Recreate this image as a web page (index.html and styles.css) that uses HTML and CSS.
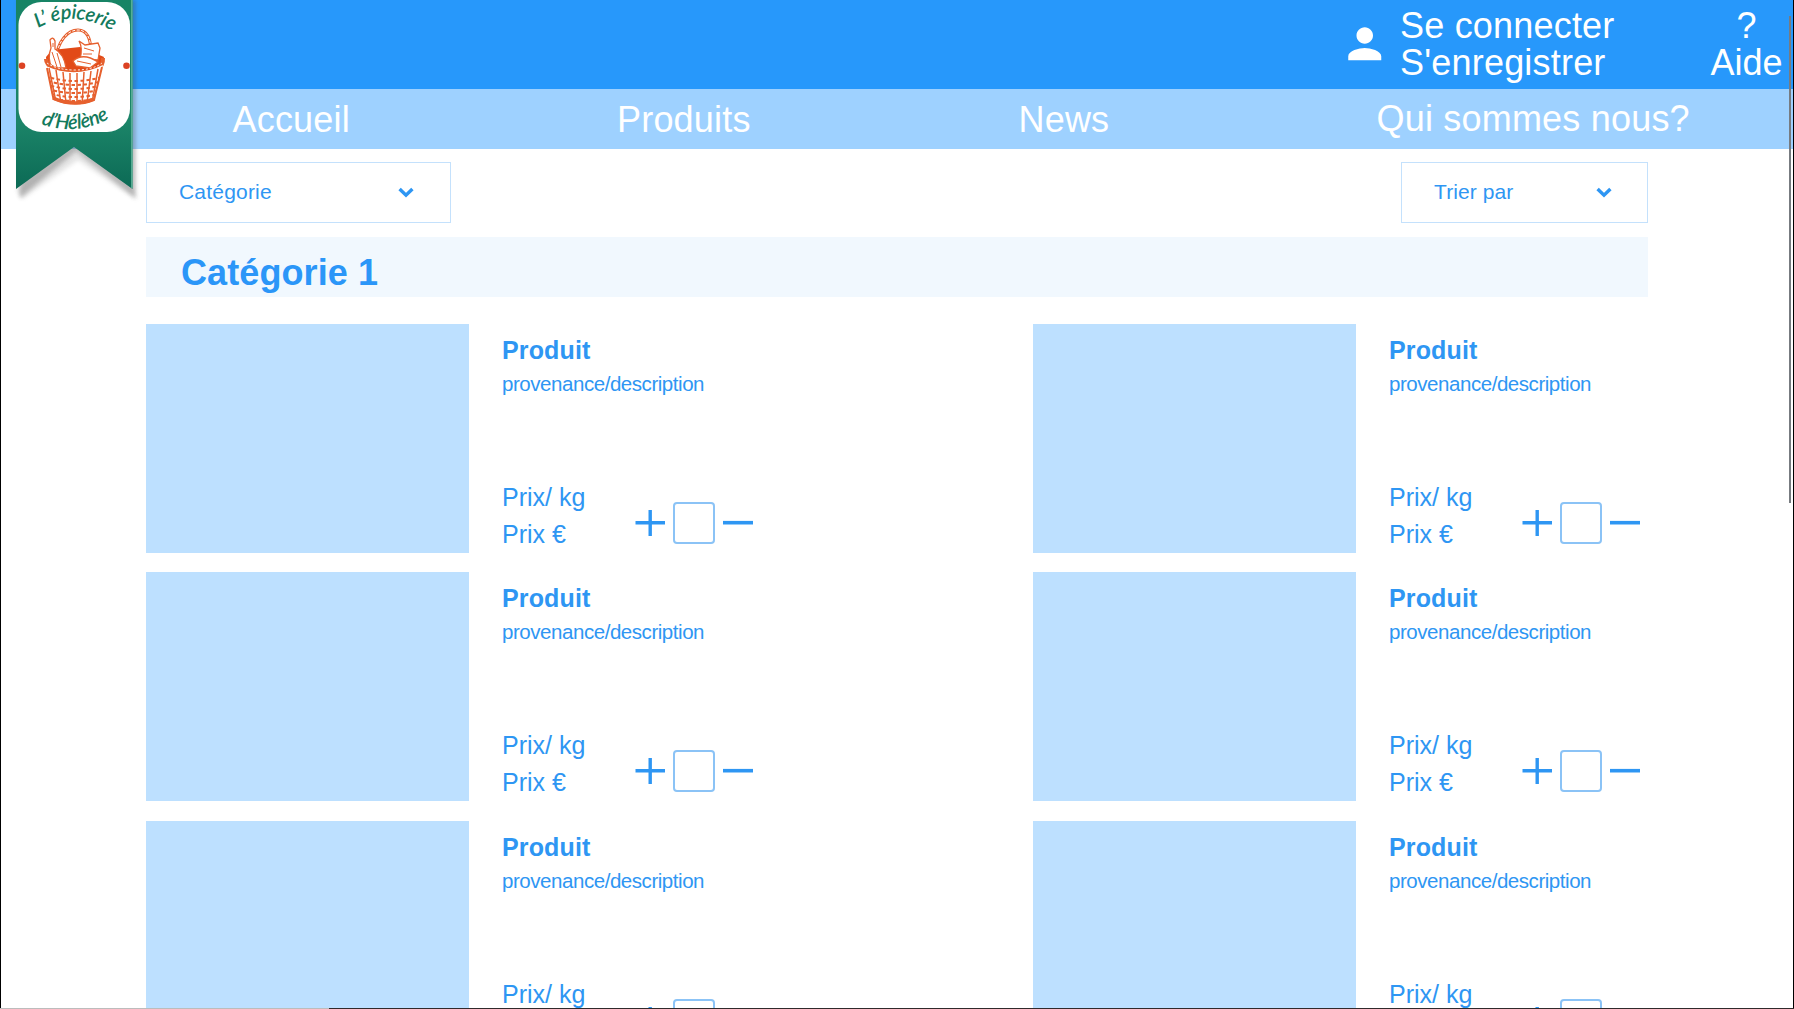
FILE: index.html
```html
<!DOCTYPE html>
<html lang="fr">
<head>
<meta charset="utf-8">
<title>L'épicerie d'Hélène</title>
<link rel="stylesheet" href="styles.css">
</head>
<body>
<svg class="defs" width="0" height="0">
  <symbol id="chevron" viewBox="0 0 16 11"><path d="M1.6 2 8 8.2 14.4 2" fill="none" stroke="currentColor" stroke-width="3.4"/></symbol>
  <symbol id="plus" viewBox="0 0 30 26"><path d="M0.500 12.700H30M15.200 0V26" fill="none" stroke="currentColor" stroke-width="3.400"/></symbol>
  <symbol id="minus" viewBox="0 0 30 26"><path d="M0 12.700H30" stroke="currentColor" stroke-width="3.600"/></symbol>
</svg>

<header class="topbar">
  <svg class="person" viewBox="0 0 24 24"><path fill="#fff" d="M12 12c2.21 0 4-1.79 4-4s-1.79-4-4-4-4 1.79-4 4 1.79 4 4 4zm0 2c-2.67 0-8 1.34-8 4v2h16v-2c0-2.66-5.33-4-8-4z"/></svg>
  <div class="account"><a>Se connecter</a><a>S'enregistrer</a></div>
  <div class="help"><span>?</span><span>Aide</span></div>
</header>
<nav class="menu"><a>Accueil</a><a>Produits</a><a>News</a><a class="about">Qui sommes nous?</a></nav>

<main class="content">
  <div class="filters">
    <div class="select category">Catégorie<svg class="chevron"><use href="#chevron"/></svg></div>
    <div class="select sort">Trier par<svg class="chevron"><use href="#chevron"/></svg></div>
  </div>
  <h1 class="heading">Catégorie 1</h1>
  <section class="products">
    <article class="card"><div class="photo"></div><div class="info"><h2>Produit</h2><p class="desc">provenance/description</p><div class="buy"><p class="price">Prix/ kg<br>Prix €</p><div class="qty"><svg class="op"><use href="#plus"/></svg><span class="box"></span><svg class="op"><use href="#minus"/></svg></div></div></div></article>
    <article class="card"><div class="photo"></div><div class="info"><h2>Produit</h2><p class="desc">provenance/description</p><div class="buy"><p class="price">Prix/ kg<br>Prix €</p><div class="qty"><svg class="op"><use href="#plus"/></svg><span class="box"></span><svg class="op"><use href="#minus"/></svg></div></div></div></article>
    <article class="card"><div class="photo"></div><div class="info"><h2>Produit</h2><p class="desc">provenance/description</p><div class="buy"><p class="price">Prix/ kg<br>Prix €</p><div class="qty"><svg class="op"><use href="#plus"/></svg><span class="box"></span><svg class="op"><use href="#minus"/></svg></div></div></div></article>
    <article class="card"><div class="photo"></div><div class="info"><h2>Produit</h2><p class="desc">provenance/description</p><div class="buy"><p class="price">Prix/ kg<br>Prix €</p><div class="qty"><svg class="op"><use href="#plus"/></svg><span class="box"></span><svg class="op"><use href="#minus"/></svg></div></div></div></article>
    <article class="card"><div class="photo"></div><div class="info"><h2>Produit</h2><p class="desc">provenance/description</p><div class="buy"><p class="price">Prix/ kg<br>Prix €</p><div class="qty"><svg class="op"><use href="#plus"/></svg><span class="box"></span><svg class="op"><use href="#minus"/></svg></div></div></div></article>
    <article class="card"><div class="photo"></div><div class="info"><h2>Produit</h2><p class="desc">provenance/description</p><div class="buy"><p class="price">Prix/ kg<br>Prix €</p><div class="qty"><svg class="op"><use href="#plus"/></svg><span class="box"></span><svg class="op"><use href="#minus"/></svg></div></div></div></article>
  </section>
</main>

<svg class="logo" viewBox="0 0 160 210">
  <defs>
    <linearGradient id="ribbon" x1="0" y1="0" x2="0" y2="1"><stop offset="0" stop-color="#178465"/><stop offset=".65" stop-color="#1b8468"/><stop offset="1" stop-color="#0c6a55"/></linearGradient>
    <filter id="soft" x="-20%" y="-20%" width="140%" height="140%"><feGaussianBlur stdDeviation="2"/></filter>
    <path id="arcTop" d="M38 28Q75 8 114 32"/>
    <path id="arcBottom" d="M41 124Q77 137 112 117"/>
    <clipPath id="body"><path d="M46 66 53 99Q74 109 94 100L103 65Q75 79 46 66Z"/></clipPath>
  </defs>
  <path d="M18 0H135.500V198L76 151 20 198Z" fill="#444" opacity=".35" filter="url(#soft)"/>
  <path d="M16 189 74 147 132.500 189 137 200 78 160 22 199Z" fill="#888" opacity=".22" filter="url(#soft)"/>
  <path d="M16 0H132.500V189L74 147 16 189Z" fill="url(#ribbon)"/>
  <path d="M131.800 0V188" stroke="#5cb39a" stroke-width="1.400"/>
  <rect x="18.500" y="2" width="111.500" height="130" rx="23" fill="#fff"/>
  <g class="lettering">
    <text><textPath href="#arcTop" textLength="78">L’ épicerie</textPath></text>
    <text><textPath href="#arcBottom" textLength="71">d’Hélène</textPath></text>
  </g>
  <circle cx="22" cy="65.700" r="3.300" fill="#dc4223"/><circle cx="126.500" cy="65.700" r="3.300" fill="#dc4223"/>
  <g fill="none" stroke="#e6602e">
    <path d="M55 61C58 40 68 30 78 30S90 40 91 48" stroke-width="3"/>
    <path d="M55 61C58 40 68 30 78 30S90 40 91 48" stroke="#fff" stroke-width="1" stroke-dasharray="3 1.500"/>
    <path d="M46 57 52 50 80 47 104 57 101 68Q75 76 47 68Z" fill="#e24a18" stroke="none"/>
    <path d="M50 40Q53 36 55 41V49Q64 54 66 68L52 68Q47 58 51 48Z" fill="#fff" stroke-width="1.300"/>
    <path d="M52 52 57 67M57 53 61 67M53 43V47" stroke-width="1"/>
    <path d="M79 41 85 45 98 43 100 48 98 60 80 59Q83 48 79 41Z" fill="#fff" stroke-width="1.300"/>
    <path d="M73 61Q83 52 98 62L90 68 76 66Z" fill="#fff" stroke-width="1.300"/>
    <path d="M84 48 94 51M83 54H92M77 61 91 64" stroke-width="1"/>
    <path d="M46 59Q46 70 75 72T103 58" stroke-width="4"/>
    <path d="M47 63Q57 70 75 70T102 63" stroke="#fff" stroke-width="1" stroke-dasharray="2 2"/>
    <g clip-path="url(#body)">
      <path d="M44 64H106V108H44Z" fill="#fff" stroke="none"/>
      <path d="M45 76Q75 86 105 76M45 84Q75 94 105 84M45 92Q75 102 105 92" stroke-width="2" stroke-dasharray="3.500 2.500"/>
      <path d="M45 80Q75 90 105 80M45 88Q75 98 105 88M45 96Q75 106 105 96" stroke-width="2" stroke-dasharray="3.500 2.500" stroke-dashoffset="3"/>
      <path d="M49 68 56 102M56 70 61 104M63 72 66 104M70 73V105M77 73V105M84 72 82 105M91 71 87 104M98 69 92 103" stroke-width="1.500"/>
    </g>
    <path d="M47 68 53.500 99Q74 108 94 100L102 67" stroke-width="2"/>
    <path d="M53 98Q74 107 94 99" stroke-width="3"/>
  </g>
</svg>
<div class="edge left"></div><div class="edge right"></div><div class="scroll-thumb"></div><div class="bottom-line"></div>
</body>
</html>
```
FILE: styles.css
```css
* { box-sizing: border-box; }
body {
  margin: 0;
  width: 1794px;
  height: 1009px;
  overflow: hidden;
  position: relative;
  background: #fff;
  color: #2e96f3;
  font-family: "Liberation Sans", Arial, sans-serif;
}
h1, h2, p { margin: 0; }
.defs { display: block; }
.topbar {
  height: 89px;
  display: flex;
  justify-content: flex-end;
  background: #2798fb;
  color: #fff;
  font-size: 36px;
  line-height: 37px;
  padding: 7px 11px 0 0;
}
.person { width: 49.500px; height: 49.500px; margin: 11.500px 10.500px 0 0; }
.account { display: flex; flex-direction: column; width: 310px; letter-spacing: .2px; }
.help { display: flex; flex-direction: column; align-items: center; width: 73px; }
.menu {
  height: 59.500px;
  display: grid;
  grid-template-columns: 384.500px 401.500px 358px 1fr;
  padding: 10px 0 0 232.500px;
  background: #9ed1ff;
  color: #fff;
  font-size: 36px;
  line-height: 41px;
  letter-spacing: .2px;
}
.about { margin-top: -1px; }
.content { width: 1502px; margin: 13.500px 0 0 146px; }
.filters { display: flex; justify-content: space-between; }
.select {
  height: 61px;
  display: flex;
  align-items: center;
  justify-content: space-between;
  border: 1px solid #c4e1fc;
  font-size: 21px;
  padding: 0 36px 1px 32px;
}
.category { width: 305px; letter-spacing: .2px; }
.sort { width: 247px; padding-right: 35px; letter-spacing: .1px; }
.chevron { width: 16px; height: 11px; margin-top: 1px; }
.heading {
  height: 60px;
  margin: 14px 0 27px;
  padding: 6px 0 0 35px;
  background: #f1f8fe;
  color: #2b96f8;
  font-size: 36px;
  line-height: 60px;
  letter-spacing: .1px;
}
.products {
  display: grid;
  grid-template-columns: 887px 615px;
  grid-auto-rows: 229.200px;
  row-gap: 19.100px;
}
.card { display: flex; }
.photo { width: 323px; background: #bde0ff; }
.info { display: flex; flex-direction: column; padding: 11px 0 0 33px; }
.info h2 { font-size: 25px; line-height: 30px; letter-spacing: .15px; }
.desc { font-size: 20.500px; line-height: 26px; letter-spacing: -.450px; margin-top: 6px; }
.buy { display: flex; margin-top: 82px; }
.price { width: 132.500px; font-size: 25px; line-height: 37px; }
.qty { display: flex; align-items: center; height: 42px; margin-top: 23px; }
.op { width: 30px; height: 26px; }
.box { width: 42px; height: 42px; margin: 0 8.500px 0 8px; border: 2px solid #8bc3f6; border-radius: 4px; }
.logo { position: absolute; left: 0; top: 0; width: 160px; height: 210px; }
.lettering {
  fill: #137a5c;
  font-family: Lato, "Liberation Sans", sans-serif;
  font-size: 20px;
  font-style: italic;
  font-weight: 600;
}
.edge { position: absolute; top: 0; width: 1px; height: 1008px; background: #000; }
.left { left: 0; }
.right { right: 0; }
.scroll-thumb { position: absolute; left: 1789px; top: 16px; width: 2px; height: 487px; background: #777b80; }
.bottom-line { position: absolute; left: 0; top: 1008px; width: 1794px; height: 1px; background: linear-gradient(90deg, #bcbcbc 329px, #302a2c 329px); }
```
